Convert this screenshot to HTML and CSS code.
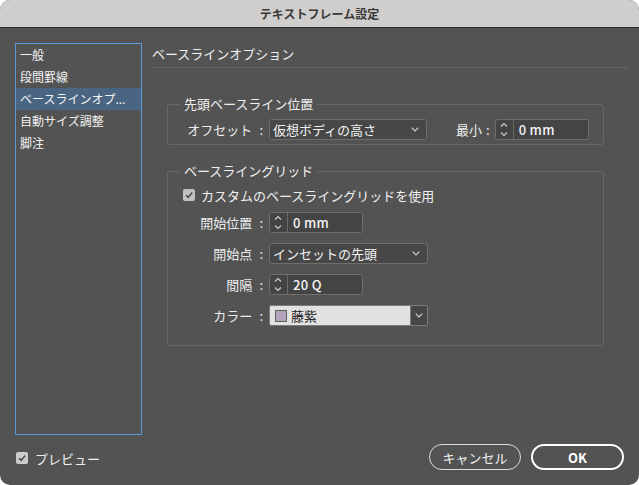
FILE: index.html
```html
<!DOCTYPE html>
<html lang="ja">
<head>
<meta charset="utf-8">
<title>テキストフレーム設定</title>
<link rel="stylesheet" href="styles.css">
</head>
<body>
<div class="window">
  <div class="titlebar">テキストフレーム設定</div>
  <div class="body">
    <ul class="sidebar">
      <li>一般</li>
      <li>段間罫線</li>
      <li class="selected">ベースラインオプ...</li>
      <li>自動サイズ調整</li>
      <li>脚注</li>
    </ul>
    <div class="main">
      <h2 class="section-title">ベースラインオプション</h2>

      <fieldset class="group group-first">
        <legend>先頭ベースライン位置</legend>
        <div class="row">
          <span class="label">オフセット<span class="colon">:</span></span>
          <div class="select w158">
            <span class="value">仮想ボディの高さ</span>
            <svg class="chev" width="8" height="5" viewBox="0 0 8 5"><polyline points="0.7,0.7 4,4 7.3,0.7" fill="none" stroke="#d0d0d0" stroke-width="1.2"/></svg>
          </div>
          <span class="label-inline">最小<span class="colon">:</span></span>
          <div class="spinner">
            <span class="spin-arrows"><svg width="16" height="19" viewBox="0 0 16 19"><polyline points="5,6.5 8,3.5 11,6.5" fill="none" stroke="#cfcfcf" stroke-width="1.1"/><polyline points="5,12.5 8,15.5 11,12.5" fill="none" stroke="#cfcfcf" stroke-width="1.1"/></svg></span>
            <span class="spin-value">0 mm</span>
          </div>
        </div>
      </fieldset>

      <fieldset class="group group-second">
        <legend>ベースライングリッド</legend>
        <div class="check-row">
          <span class="checkbox"><svg width="12" height="12" viewBox="0 0 12 12"><polyline points="3,6.2 5.2,8.4 9.2,3.6" fill="none" stroke="#4a4a4a" stroke-width="1.6"/></svg></span>
          <span>カスタムのベースライングリッドを使用</span>
        </div>
        <div class="row">
          <span class="label">開始位置<span class="colon">:</span></span>
          <div class="spinner">
            <span class="spin-arrows"><svg width="16" height="19" viewBox="0 0 16 19"><polyline points="5,6.5 8,3.5 11,6.5" fill="none" stroke="#cfcfcf" stroke-width="1.1"/><polyline points="5,12.5 8,15.5 11,12.5" fill="none" stroke="#cfcfcf" stroke-width="1.1"/></svg></span>
            <span class="spin-value">0 mm</span>
          </div>
        </div>
        <div class="row">
          <span class="label">開始点<span class="colon">:</span></span>
          <div class="select w159">
            <span class="value">インセットの先頭</span>
            <svg class="chev" width="8" height="5" viewBox="0 0 8 5"><polyline points="0.7,0.7 4,4 7.3,0.7" fill="none" stroke="#d0d0d0" stroke-width="1.2"/></svg>
          </div>
        </div>
        <div class="row">
          <span class="label">間隔<span class="colon">:</span></span>
          <div class="spinner">
            <span class="spin-arrows"><svg width="16" height="19" viewBox="0 0 16 19"><polyline points="5,6.5 8,3.5 11,6.5" fill="none" stroke="#cfcfcf" stroke-width="1.1"/><polyline points="5,12.5 8,15.5 11,12.5" fill="none" stroke="#cfcfcf" stroke-width="1.1"/></svg></span>
            <span class="spin-value">20 Q</span>
          </div>
        </div>
        <div class="row">
          <span class="label">カラー<span class="colon">:</span></span>
          <div class="color-select">
            <span class="color-field"><span class="swatch"></span><span class="color-name">藤紫</span></span>
            <span class="color-btn"><svg width="8" height="5" viewBox="0 0 8 5"><polyline points="0.7,0.7 4,4 7.3,0.7" fill="none" stroke="#d0d0d0" stroke-width="1.2"/></svg></span>
          </div>
        </div>
      </fieldset>
    </div>
  </div>
  <div class="footer">
    <div class="preview">
      <span class="checkbox light"><svg width="12" height="12" viewBox="0 0 12 12"><polyline points="3,6.2 5.2,8.4 9.2,3.6" fill="none" stroke="#4a4a4a" stroke-width="1.6"/></svg></span>
      <span>プレビュー</span>
    </div>
    <div class="buttons">
      <button class="btn">キャンセル</button>
      <button class="btn btn-primary">OK</button>
    </div>
  </div>
</div>
</body>
</html>
```

FILE: styles.css
```css
* { box-sizing: border-box; }

html, body {
  margin: 0;
  padding: 0;
  background: #ffffff;
}

body {
  font-family: "Noto Sans CJK JP", "Noto Sans", sans-serif;
  font-size: 13px;
  color: #ececec;
}

.window {
  width: 639px;
  height: 485px;
  background: #535353;
  border-radius: 10px;
  overflow: hidden;
  display: flex;
  flex-direction: column;
}

.titlebar {
  height: 28px;
  flex: none;
  background: #cfcecc;
  border-bottom: 1px solid #2c2c2c;
  color: #3a3a3a;
  font-size: 12px;
  font-weight: 700;
  display: flex;
  align-items: center;
  justify-content: center;
}

.body {
  display: flex;
  height: 407px;
  flex: none;
  padding: 15px 0 0 15px;
}

.sidebar {
  width: 127px;
  height: 392px;
  margin: 0;
  padding: 0;
  list-style: none;
  border: 1px solid #5b9ad6;
  font-size: 12px;
}

.sidebar li {
  height: 22px;
  line-height: 22px;
  padding-left: 4px;
  color: #f2f2f2;
  white-space: nowrap;
}

.sidebar li.selected {
  background: #4a6581;
}

.main {
  flex: 1;
  margin-left: 10px;
  padding-right: 10px;
}

.section-title {
  margin: 0;
  height: 25px;
  font-size: 13px;
  font-weight: 400;
  line-height: 22px;
  color: #f0f0f0;
  border-bottom: 1px solid #636363;
}

.group {
  width: 437px;
  margin: 27px 0 0 15px;
  padding: 6px 0 4px 0;
  border: 1px solid #676767;
  border-radius: 3px;
  min-width: 0;
}

.group legend {
  margin-left: 12px;
  padding: 0 4px;
  line-height: 18px;
  font-size: 13px;
  color: #f0f0f0;
}

.group-second {
  margin-top: 17px;
  padding: 7px 0 19px 0;
}

.row {
  display: flex;
  align-items: center;
  height: 21px;
}

.group-second .row {
  margin-top: 10px;
}

.group-second .check-row + .row {
  margin-top: 9px;
}

.label {
  width: 101px;
  padding-right: 6px;
  text-align: right;
  color: #ececec;
  white-space: nowrap;
}

.colon {
  margin-left: 7px;
}

.label-inline {
  margin-left: 29px;
  margin-right: 5px;
  color: #ececec;
  white-space: nowrap;
}

.label-inline .colon {
  margin-left: 4px;
}

.select {
  height: 21px;
  display: flex;
  align-items: center;
  justify-content: space-between;
  background: #474747;
  border: 1px solid #6e6e6e;
  border-radius: 3px;
  padding: 0 7px 0 3px;
  color: #f2f2f2;
}

.w158 { width: 158px; }
.w159 { width: 159px; }

.chev { display: block; }

.spinner {
  width: 94px;
  height: 21px;
  display: flex;
  align-items: stretch;
  background: #444444;
  border: 1px solid #6e6e6e;
  border-radius: 3px;
}

.spin-arrows {
  width: 18px;
  border-right: 1px solid #6a6a6a;
  display: flex;
  align-items: center;
}

.spin-arrows svg { display: block; }

.spin-value {
  padding-left: 5px;
  line-height: 19px;
  color: #f5f5f5;
  font-weight: 500;
  letter-spacing: 0.3px;
}

.check-row {
  display: flex;
  align-items: center;
  height: 16px;
  padding-left: 15px;
  color: #f0f0f0;
}

.checkbox {
  width: 12px;
  height: 12px;
  border-radius: 2px;
  background: #c2c2c2;
  margin-right: 6px;
  display: flex;
}

.checkbox svg { display: block; }

.checkbox.light {
  background: #cbcbcb;
  margin-right: 7px;
}

.color-select {
  width: 159px;
  height: 21px;
  display: flex;
  border: 1px solid #7c7c7c;
  border-radius: 2px;
  overflow: hidden;
}

.color-field {
  flex: 1;
  display: flex;
  align-items: center;
  background: #e2e2e2;
  padding-left: 5px;
}

.swatch {
  width: 12px;
  height: 12px;
  background: #b3a6bc;
  border: 1px solid #5e5e5e;
  margin-right: 4px;
}

.color-name {
  color: #1e1e1e;
}

.color-btn {
  width: 17px;
  background: #464646;
  border-left: 1px solid #7c7c7c;
  display: flex;
  align-items: center;
  justify-content: center;
}

.footer {
  flex: 1;
  display: flex;
  justify-content: space-between;
  align-items: flex-start;
  padding: 9px 15px 0 16px;
}

.preview {
  display: flex;
  align-items: center;
  height: 26px;
  padding-top: 2px;
  color: #f0f0f0;
}

.buttons {
  display: flex;
  gap: 10px;
}

.btn {
  width: 92px;
  height: 26px;
  border: 1.5px solid #dcdcdc;
  border-radius: 13px;
  background: transparent;
  color: #f0f0f0;
  font-family: inherit;
  font-size: 13px;
  padding: 0;
}

.btn-primary {
  width: 93px;
  border: 2px solid #ffffff;
  font-weight: 700;
  color: #ffffff;
}
```
